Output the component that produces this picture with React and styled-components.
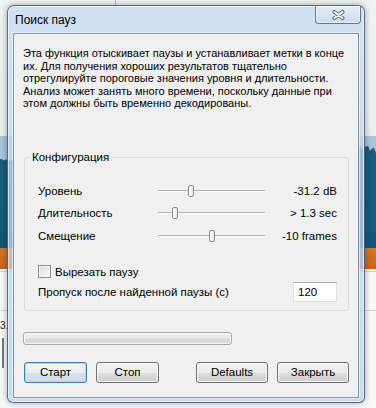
import React from "react";
import styled, { createGlobalStyle } from "styled-components";

const Global = createGlobalStyle`
  html, body { margin: 0; padding: 0; }
  body {
    width: 376px; height: 408px; overflow: hidden;
    background: #f5f6f7;
    font-family: "Liberation Sans", Arial, sans-serif;
  }
`;

const Desktop = styled.div`
  position: relative;
  width: 376px;
  height: 408px;
  overflow: hidden;
`;

/* ---------- app behind the dialog ---------- */
const Backdrop = styled.div`
  display: flex;
  flex-direction: column;
  width: 100%;
  height: 100%;
`;
const TopArea = styled.div`
  flex: none;
  height: 136px;
  background: linear-gradient(#f1f2f4, #eceef0);
`;
const GreenMark = styled.div`
  width: 1px;
  height: 5px;
  margin-left: 115px;
  background: #9ad05a;
`;
const WaveBand = styled.div`
  flex: none;
  height: 112px;
  display: flex;
`;
const OrangeBand = styled.div`
  flex: none;
  height: 21px;
  background: linear-gradient(#d9761f, #c9651a);
`;
const BottomArea = styled.div`
  flex: 1;
  display: flex;
  flex-direction: column;
  background: #f8f8f8;
`;
const HLine = styled.div`
  height: 1px;
  margin-top: ${(p) => p.$mt}px;
  background: #cfd2d6;
`;
const StrayText = styled.div`
  margin: 8px 0 0 0;
  font-size: 10px;
  line-height: 13px;
  color: #222;
`;
const VMark = styled.div`
  width: 2px;
  height: 30px;
  margin: 6px 0 0 2px;
  background: #777;
`;

/* ---------- dialog window ---------- */
const Window = styled.div`
  position: absolute;
  left: 7px;
  top: 5px;
  width: 358px;
  height: 398px;
  box-sizing: border-box;
  display: flex;
  flex-direction: column;
  padding: 0 5px 4px 5px;
  border: 1px solid rgba(40, 60, 90, 0.7);
  border-radius: 7px 7px 6px 6px;
  background: linear-gradient(rgba(198, 220, 242, 0.8), rgba(182, 207, 234, 0.76));
  box-shadow: 0 0 6px rgba(0, 0, 0, 0.35), inset 0 0 0 1px rgba(255, 255, 255, 0.55);
`;
const TitleBar = styled.div`
  flex: none;
  height: 27px;
  display: flex;
  justify-content: space-between;
  align-items: flex-start;
  padding-left: 2px;
`;
const Title = styled.div`
  margin-top: 7px;
  font-family: "Liberation Sans", Arial, sans-serif;
  font-size: 12px;
  line-height: 14px;
  color: #000;
`;
const CloseButton = styled.div`
  width: 46px;
  height: 18px;
  margin-right: -2px;
  box-sizing: border-box;
  display: flex;
  align-items: center;
  justify-content: center;
  border: 1px solid rgba(60, 80, 105, 0.75);
  border-top: none;
  border-radius: 0 0 4px 4px;
  background: linear-gradient(rgba(235, 242, 250, 0.7), rgba(200, 218, 238, 0.55));
  box-shadow: inset 0 0 0 1px rgba(255, 255, 255, 0.6);
`;
const Client = styled.div`
  flex: 1;
  display: flex;
  flex-direction: column;
  border: 1px solid #7f95ac;
  background: #f0f0f0;
  box-shadow: 0 0 0 1px rgba(255, 255, 255, 0.5);
  font-family: "Liberation Sans", Arial, sans-serif;
  color: #000;
`;
const Intro = styled.p`
  margin: 13px 6px 0 9px;
  font-size: 11px;
  line-height: 12.6px;
  white-space: nowrap;
`;
const Group = styled.fieldset`
  margin: 41px 9px 0 10px;
  padding: 0;
  min-inline-size: 0;
  border: 1px solid #d5dfe5;
  border-radius: 3px;
`;
const Legend = styled.legend`
  margin-left: 5px;
  padding: 0 2px;
  font-size: 11.5px;
  line-height: 13px;
`;
const GroupBody = styled.div`
  display: flex;
  flex-direction: column;
  padding: 17px 11px 8px 13px;
`;
const SliderRow = styled.div`
  height: ${(p) => p.$h}px;
  display: grid;
  grid-template-columns: 120px 107px 1fr;
  align-items: center;
  font-size: 11.5px;
`;
const Value = styled.div`
  text-align: right;
`;
const Track = styled.div`
  position: relative;
  height: 0;
  border-top: 1px solid #b2b2b2;
  border-bottom: 1px solid #fdfdfd;
`;
const Thumb = styled.div`
  position: absolute;
  top: -6px;
  width: 6px;
  height: 12px;
  margin-left: -3px;
  box-sizing: border-box;
  border: 1px solid #8d8d8d;
  border-radius: 2px;
  background: linear-gradient(to right, #ffffff, #e4e4e4);
`;
const CheckRow = styled.label`
  height: 18px;
  margin-top: 15px;
  display: flex;
  align-items: center;
  gap: 4px;
  font-size: 11.5px;
`;
const CheckBox = styled.span`
  width: 13px;
  height: 13px;
  box-sizing: border-box;
  border: 1px solid #8e8f8f;
  background: linear-gradient(135deg, #dcdcdc, #fafafa);
  box-shadow: inset 0 0 0 1px #f4f4f4;
`;
const PauseRow = styled.div`
  height: 20px;
  margin-top: 1px;
  display: flex;
  align-items: center;
  font-size: 11.5px;
`;
const NumberInput = styled.div`
  width: 44px;
  height: 20px;
  margin-left: auto;
  box-sizing: border-box;
  padding: 3px 0 0 4px;
  border: 1px solid #dbdfe6;
  border-top-color: #abadb3;
  background: #fff;
  font-size: 11.5px;
  line-height: 13px;
`;
const Progress = styled.div`
  width: 209px;
  height: 13px;
  margin: 21px 0 0 9px;
  box-sizing: border-box;
  border: 1px solid #a9a9a9;
  border-radius: 3px;
  background: linear-gradient(#f3f3f3, #e4e4e4 50%, #d6d6d6 51%, #dcdcdc);
  box-shadow: inset 0 0 0 1px rgba(255, 255, 255, 0.7);
`;
const ButtonBar = styled.div`
  display: flex;
  justify-content: space-between;
  margin: 17px 9px 0 10px;
`;
const ButtonGroup = styled.div`
  display: flex;
  gap: 9px;
`;
const Button = styled.button`
  width: ${(p) => p.$w}px;
  height: 21px;
  box-sizing: border-box;
  padding: 0;
  border: 1px solid ${(p) => (p.$primary ? "#3c7fb1" : "#707070")};
  border-radius: 3px;
  background: ${(p) =>
    p.$primary
      ? "linear-gradient(#f2f6f9, #e6eef4 50%, #d8e3ec 51%, #cddbe7)"
      : "linear-gradient(#f2f2f2, #ebebeb 50%, #dddddd 51%, #cfcfcf)"};
  box-shadow: inset 0 0 0 1px ${(p) => (p.$primary ? "#a9dbf6" : "#fbfbfb")};
  font-family: "Liberation Sans", Arial, sans-serif;
  font-size: 11.5px;
  color: #000;
`;

function WaveArt() {
  const pts = [];
  for (let x = 0; x <= 376; x += 2) {
    let base = x < 30 ? 23 : x > 330 ? 9 : 15;
    const j = Math.abs(Math.sin(x * 1.7) * 5 + Math.sin(x * 0.43) * 3);
    pts.push(`${x},${(base + j * (x > 330 ? 1 : 0.3)).toFixed(1)}`);
  }
  return (
    <svg width="376" height="112" viewBox="0 0 376 112">
      <rect width="376" height="112" fill="#a8c5da" />
      <polygon points={`0,112 ${pts.join(" ")} 376,112`} fill="#175d7c" />
      <rect y="96" width="376" height="16" fill="#135271" opacity="0.5" />
    </svg>
  );
}

function CloseGlyph() {
  return (
    <svg width="13" height="10" viewBox="0 0 13 10">
      <path d="M2.5 2 L10.5 8 M10.5 2 L2.5 8" stroke="#59697b" strokeWidth="4" strokeLinecap="round" fill="none" />
      <path d="M2.5 2 L10.5 8 M10.5 2 L2.5 8" stroke="#ffffff" strokeWidth="2" strokeLinecap="round" fill="none" />
    </svg>
  );
}

const sliders = [
  { label: "Уровень", pos: 33, value: "-31.2 dB", h: 21 },
  { label: "Длительность", pos: 16.5, value: "> 1.3 sec", h: 22 },
  { label: "Смещение", pos: 54, value: "-10 frames", h: 24 },
];

export default function App() {
  return (
    <>
      <Global />
      <Desktop>
        <Backdrop>
          <TopArea>
            <GreenMark />
          </TopArea>
          <WaveBand>
            <WaveArt />
          </WaveBand>
          <OrangeBand />
          <BottomArea>
            <HLine $mt={2} />
            <HLine $mt={38} />
            <StrayText>3.</StrayText>
            <VMark />
          </BottomArea>
        </Backdrop>

        <Window>
          <TitleBar>
            <Title>Поиск пауз</Title>
            <CloseButton>
              <CloseGlyph />
            </CloseButton>
          </TitleBar>
          <Client>
            <Intro>
              Эта функция отыскивает паузы и устанавливает метки в конце
              <br />
              их. Для получения хороших результатов тщательно
              <br />
              отрегулируйте пороговые значения уровня и длительности.
              <br />
              Анализ может занять много времени, поскольку данные при
              <br />
              этом должны быть временно декодированы.
            </Intro>
            <Group>
              <Legend>Конфигурация</Legend>
              <GroupBody>
                {sliders.map((s) => (
                  <SliderRow key={s.label} $h={s.h}>
                    <span>{s.label}</span>
                    <Track>
                      <Thumb style={{ left: `${s.pos}px` }} />
                    </Track>
                    <Value>{s.value}</Value>
                  </SliderRow>
                ))}
                <CheckRow>
                  <CheckBox />
                  Вырезать паузу
                </CheckRow>
                <PauseRow>
                  Пропуск после найденной паузы (с)
                  <NumberInput>120</NumberInput>
                </PauseRow>
              </GroupBody>
            </Group>
            <Progress />
            <ButtonBar>
              <ButtonGroup>
                <Button $w={63} $primary>Старт</Button>
                <Button $w={63}>Стоп</Button>
              </ButtonGroup>
              <ButtonGroup>
                <Button $w={72}>Defaults</Button>
                <Button $w={72}>Закрыть</Button>
              </ButtonGroup>
            </ButtonBar>
          </Client>
        </Window>
      </Desktop>
    </>
  );
}
